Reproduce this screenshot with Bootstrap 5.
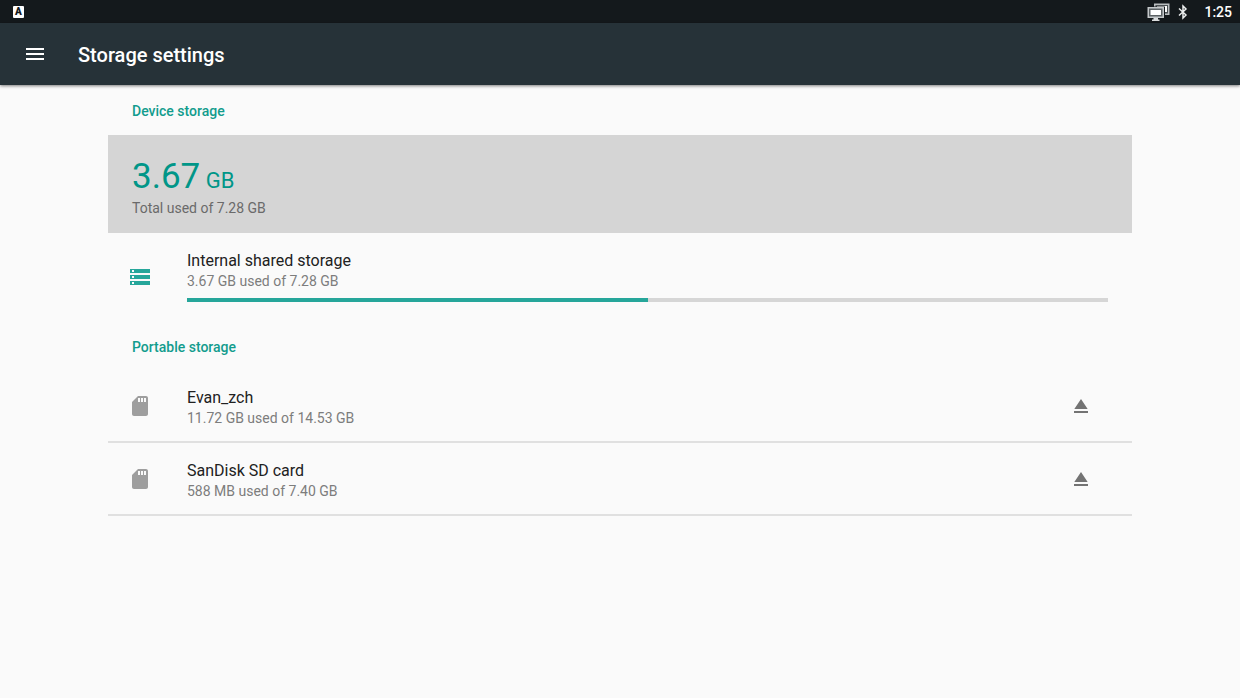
<!DOCTYPE html>
<html lang="en">
<head>
<meta charset="utf-8">
<meta name="viewport" content="width=device-width, initial-scale=1">
<title>Storage settings</title>
<link href="https://cdn.jsdelivr.net/npm/bootstrap@5.3.0/dist/css/bootstrap.min.css" rel="stylesheet">
<style>
  body { font-family: Roboto, "Noto Sans", sans-serif; background: #fafafa; color: #212121; }
  svg { display: block; flex: none; }
  .status-bar { height: 23px; background: #14191c; padding: 0 8px 0 13px; color: #fff; }
  .keyboard-badge { width: 11px; height: 12px; background: #fff; color: #14191c; border-radius: 1px; font-size: 10px; line-height: 12px; font-weight: 900; }
  .bluetooth { margin-left: 8px; }
  .clock { font-size: 14px; line-height: 24px; font-weight: 500; margin-left: 16px; }
  .app-bar { height: 62px; background: #263238; color: #fff; padding: 0 23px; box-shadow: 0 1px 3px rgba(0,0,0,.5); }
  .app-title { font-size: 20px; line-height: 28px; font-weight: 500; margin-left: 31px; padding-top: 2px; }
  .icon-btn { padding: 0; border: 0; background: none; color: inherit; }
  .settings-list { max-width: 1024px; }
  .section-title { font-size: 14px; line-height: 20px; font-weight: 500; color: #129c8d; padding: 16px 24px 14px; }
  .total-panel { background: #d5d5d5; padding: 24px 24px 15px; }
  .total-value { font-size: 35px; line-height: 36px; height: 39px; color: #009688; }
  .total-unit { font-size: 22px; }
  .item-detail { font-size: 14px; line-height: 20px; color: #7d7d7d; }
  .total-panel .item-detail { color: #6a6a6a; }
  .item-name { font-size: 16px; line-height: 20px; color: #212121; }
  .volume { padding: 18px 24px 17px 20px; }
  .volume-icon { width: 59px; }
  .volume + .section-title { padding-top: 18px; padding-bottom: 13px; }
  .portable { border-bottom: 2px solid #e0e0e0; padding-top: 14px; padding-bottom: 13px; }
  .portable-link { padding-top: 4px; }
  .usage { height: 4px; border-radius: 0; background: #d6d6d6; margin-top: 7px; }
  .usage .progress-bar { background: #26a69a; }
  .eject { color: #737373; margin-right: 15px; }
</style>
</head>
<body>
<header>
  <div class="status-bar d-flex align-items-center">
    <span class="keyboard-badge text-center">A</span>
    <svg class="ms-auto" width="23" height="18" viewBox="0 0 23 18" aria-hidden="true">
      <path d="M7 .500h15.500V12H17V9H7z" fill="#b9bdbf"/>
      <path d="M8.500 2H21v8.500h-5V4H8.500z" fill="#4b5154"/>
      <path d="M10 3h10v6h-3V4h-7z" fill="#fff"/>
      <path d="M0 3.500h18V16H0z" fill="#14191c"/>
      <path d="M.500 4H17v11H.500z" fill="#c4c8ca"/>
      <path d="M2 5.500h13.500v8H2z" fill="#5b6164"/>
      <path d="M3.500 7H14v5H3.500z" fill="#fff"/>
      <path d="M6.500 15h4.500v1.500h1.500V18H5v-1.500h1.500z" fill="#dadcdd"/>
    </svg>
    <svg class="bluetooth" width="10" height="16" viewBox="0 0 10 16" fill="none" stroke="#eceeee" stroke-width="1.5" aria-hidden="true">
      <path d="M1 4.500 8 11 5 14V2l3 3-7 6.500"/>
    </svg>
    <span class="clock">1:25</span>
  </div>
  <nav class="app-bar d-flex align-items-center">
    <button type="button" class="icon-btn" aria-label="Open navigation">
      <svg width="24" height="24" viewBox="0 0 24 24" fill="currentColor"><path d="M3 6h18v2H3zM3 11h18v2H3zM3 16h18v2H3z"/></svg>
    </button>
    <h1 class="app-title mb-0">Storage settings</h1>
  </nav>
</header>

<main class="settings-list mx-auto">
  <h2 class="section-title mb-0">Device storage</h2>
  <div class="total-panel">
    <div class="total-value">3.67<span class="total-unit"> GB</span></div>
    <div class="item-detail">Total used of 7.28 GB</div>
  </div>
  <a href="#internal" class="volume d-flex align-items-center text-decoration-none">
    <div class="volume-icon">
      <svg width="24" height="24" viewBox="0 0 24 24" fill="#26a69a"><path d="M2 20h20v-4H2v4zm2-3h2v2H4v-2zM2 4v4h20V4H2zm4 3H4V5h2v2zm-4 7h20v-4H2v4zm2-3h2v2H4v-2z"/></svg>
    </div>
    <div class="flex-grow-1">
      <div class="item-name">Internal shared storage</div>
      <div class="item-detail">3.67 GB used of 7.28 GB</div>
      <div class="progress usage" role="progressbar" aria-label="Internal storage used" aria-valuenow="50" aria-valuemin="0" aria-valuemax="100">
        <div class="progress-bar" style="width: 50%"></div>
      </div>
    </div>
  </a>
  <h2 class="section-title mb-0">Portable storage</h2>
  <div class="volume portable d-flex align-items-center">
    <div class="volume-icon">
      <svg width="24" height="24" viewBox="0 0 24 24" fill="#9e9e9e"><path d="M18 2h-8L4.020 8 4 20c0 1.100.9 2 2 2h12c1.100 0 2-.9 2-2V4c0-1.100-.9-2-2-2zm-6 6h-2V4h2v4zm3 0h-2V4h2v4zm3 0h-2V4h2v4z"/></svg>
    </div>
    <a href="#evan" class="portable-link flex-grow-1 text-decoration-none">
      <div class="item-name">Evan_zch</div>
      <div class="item-detail">11.72 GB used of 14.53 GB</div>
    </a>
    <button type="button" class="icon-btn eject" aria-label="Eject Evan_zch">
      <svg width="24" height="24" viewBox="0 0 24 24" fill="currentColor"><path d="M5 17h14v2H5zM12 5 5.330 15h13.340z"/></svg>
    </button>
  </div>
  <div class="volume portable d-flex align-items-center">
    <div class="volume-icon">
      <svg width="24" height="24" viewBox="0 0 24 24" fill="#9e9e9e"><path d="M18 2h-8L4.020 8 4 20c0 1.100.9 2 2 2h12c1.100 0 2-.9 2-2V4c0-1.100-.9-2-2-2zm-6 6h-2V4h2v4zm3 0h-2V4h2v4zm3 0h-2V4h2v4z"/></svg>
    </div>
    <a href="#sandisk" class="portable-link flex-grow-1 text-decoration-none">
      <div class="item-name">SanDisk SD card</div>
      <div class="item-detail">588 MB used of 7.40 GB</div>
    </a>
    <button type="button" class="icon-btn eject" aria-label="Eject SanDisk SD card">
      <svg width="24" height="24" viewBox="0 0 24 24" fill="currentColor"><path d="M5 17h14v2H5zM12 5 5.330 15h13.340z"/></svg>
    </button>
  </div>
</main>
<script src="https://cdn.jsdelivr.net/npm/bootstrap@5.3.0/dist/js/bootstrap.bundle.min.js"></script>
</body>
</html>
